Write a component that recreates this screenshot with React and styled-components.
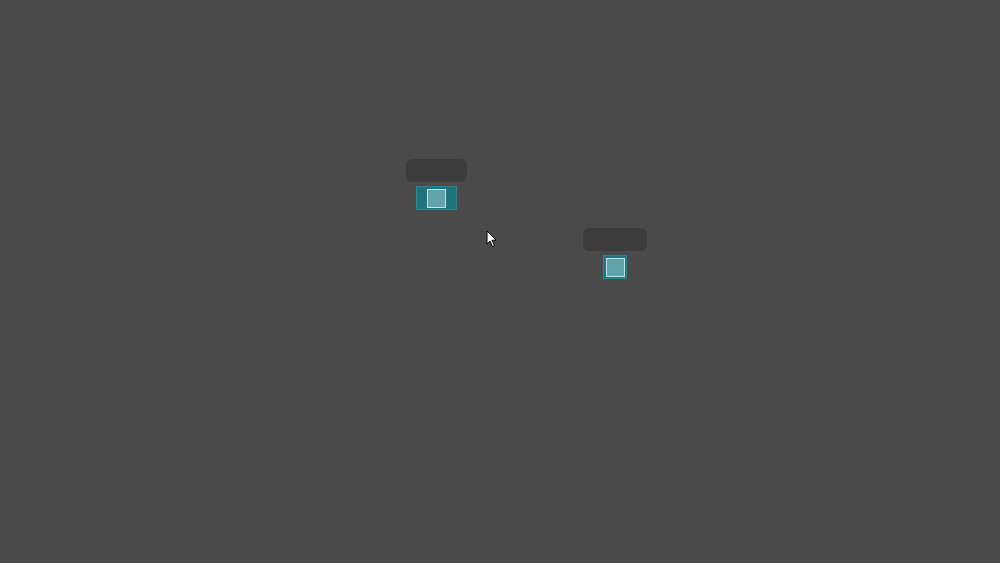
import React from "react";
import styled, { createGlobalStyle } from "styled-components";

const Global = createGlobalStyle`
  html, body { margin: 0; padding: 0; background: #4a4a4a; overflow: hidden; }
  #root { width: 1000px; height: 563px; }
`;

const Canvas = styled.div`
  position: relative;
  width: 1000px;
  height: 563px;
  background: #4a4a4a;
  font-family: "Liberation Sans", Arial, sans-serif;
  overflow: hidden;
`;

const Node = styled.div`
  position: absolute;
  left: ${(p) => p.x}px;
  top: ${(p) => p.y}px;
  width: ${(p) => p.w}px;
  display: flex;
  flex-direction: column;
  align-items: center;
  gap: 4px;
`;

const Label = styled.div`
  width: 100%;
  height: 23px;
  border-radius: 6px;
  background: #3b3b3b;
`;

const Port = styled.div`
  box-sizing: border-box;
  width: ${(p) => p.w}px;
  height: 24px;
  background: #1f737d;
  border: 1px solid #2a8892;
  display: flex;
  align-items: center;
  justify-content: center;
`;

const Handle = styled.div`
  box-sizing: border-box;
  width: 19px;
  height: 19px;
  background: #62a3aa;
  border: 1.5px solid #b5e6ec;
`;

const Cursor = styled.svg`
  position: absolute;
  left: 486px;
  top: 230px;
`;

export default function App() {
  return (
    <>
      <Global />
      <Canvas>
        <Node x={406} y={159} w={61}>
          <Label />
          <Port w={41}>
            <Handle />
          </Port>
        </Node>
        <Node x={583} y={228} w={64}>
          <Label />
          <Port w={24}>
            <Handle />
          </Port>
        </Node>
        <Cursor width="12" height="18" viewBox="0 0 12 18">
          <path d="M1 1 L1 14 L4 11 L6.5 16.5 L8.5 15.5 L6 10.2 L10.2 10.2 Z" fill="#fff" stroke="#000" strokeWidth="1" strokeLinejoin="round" />
        </Cursor>
      </Canvas>
    </>
  );
}
